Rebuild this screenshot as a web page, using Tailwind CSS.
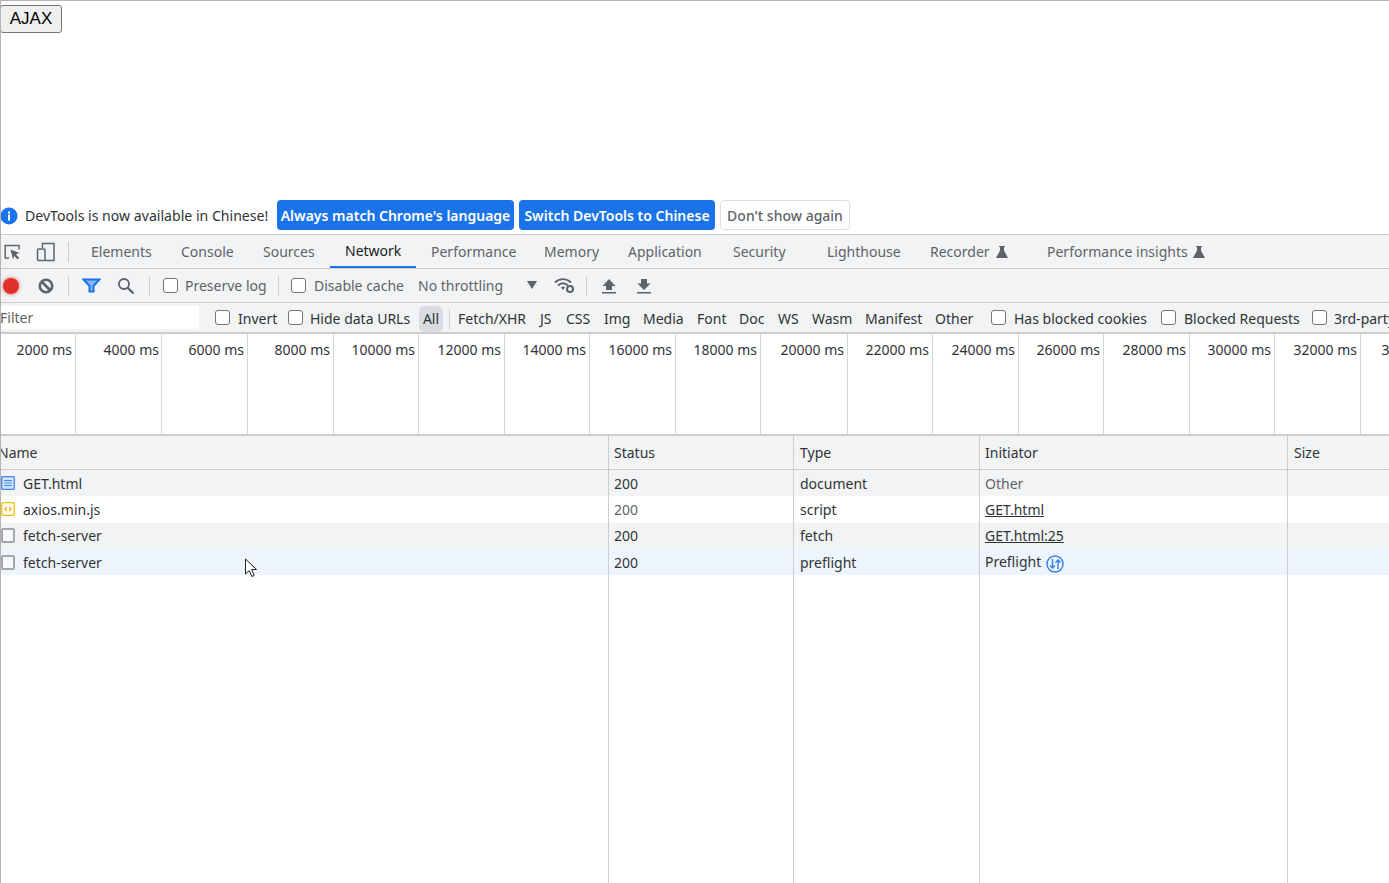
<!DOCTYPE html>
<html><head><meta charset="utf-8"><title>AJAX</title>
<script src="https://cdn.jsdelivr.net/npm/@tailwindcss/browser@4"></script></head>
<body class="m-0 bg-white">
<div class="relative w-[1389px] h-[883px] overflow-hidden bg-white border-t border-l border-[#b4b4b4] flex flex-col font-['Noto_Sans',sans-serif] text-[14px] text-[#303336]">
  <div class="h-[199px] shrink-0 pt-[4px]">
    <button class="block -ml-px w-[62px] h-[28px] pb-[2px] rounded-[3px] border border-[#767676] bg-[#efefef] text-black text-[17px] font-['Liberation_Sans',sans-serif] leading-none">AJAX</button>
  </div>
  <div class="h-[35px] shrink-0 flex items-start border-b border-[#cbcdd1]">
    <svg class="-ml-px mt-[7px] shrink-0" width="18" height="18" viewBox="0 0 18 18"><circle cx="9" cy="9" r="8.5" fill="#1a73e8"/><rect x="8" y="7.5" width="2" height="6" fill="#fff"/><rect x="8" y="4.5" width="2" height="2" fill="#fff"/></svg>
    <span class="ml-[7px] w-[252px] mt-[6px] leading-[20px] whitespace-nowrap text-[14.1px]">DevTools is now available in Chinese!</span>
    <span class="w-[237px] h-[30px] rounded-[4px] bg-[#1a73e8] text-white font-semibold flex items-center justify-center whitespace-nowrap">Always match Chrome's language</span>
    <span class="ml-[5px] w-[196px] h-[30px] rounded-[4px] bg-[#1a73e8] text-white font-semibold flex items-center justify-center whitespace-nowrap">Switch DevTools to Chinese</span>
    <span class="ml-[5px] w-[130px] h-[30px] rounded-[4px] bg-white border border-[#dadce0] text-[#5f6368] font-medium flex items-center justify-center whitespace-nowrap">Don't show again</span>
  </div>
  <div class="h-[34px] shrink-0 bg-[#f1f3f4] border-b border-[#cbcdd1] flex items-center text-[#5f6368]">
    <svg class="ml-[2px] shrink-0" width="18" height="18" viewBox="0 0 18 18" fill="none"><path d="M6 15H2.200V2.500H16V6.500" stroke="#5f6368" stroke-width="1.500"/><path d="M7.500 6.500l9 3.600-3.600 1.300 3.400 3.400-1.600 1.600-3.400-3.400-1.200 3.600z" fill="#5f6368"/></svg>
    <svg class="ml-[15px] shrink-0" width="20" height="20" viewBox="0 0 20 20" fill="none" stroke="#5f6368" stroke-width="1.500"><path d="M6.500 6V1.500H18V18.500H9"/><rect x="1.500" y="7" width="7.500" height="11.500" rx="1"/></svg>
    <div class="ml-[12px] w-px h-[20px] bg-[#cbcdd1] shrink-0"></div>
    <div class="ml-[7px] flex h-full items-stretch whitespace-nowrap">
      <span class="w-[90px] pl-[15px] flex items-center">Elements</span>
      <span class="w-[82px] pl-[15px] flex items-center">Console</span>
      <span class="w-[82px] pl-[15px] flex items-center">Sources</span>
      <span class="w-[86px] pl-[15px] flex items-center text-[#202124] border-b-2 border-[#1a73e8]">Network</span>
      <span class="w-[113px] pl-[15px] flex items-center">Performance</span>
      <span class="w-[84px] pl-[15px] flex items-center">Memory</span>
      <span class="w-[105px] pl-[15px] flex items-center">Application</span>
      <span class="w-[94px] pl-[15px] flex items-center">Security</span>
      <span class="w-[103px] pl-[15px] flex items-center">Lighthouse</span>
      <span class="w-[117px] pl-[15px] flex items-center">Recorder
        <svg class="ml-[6px]" width="12" height="12" viewBox="0 0 12 12"><path d="M3 0h6v1H8v3.500L12 12H0l4-7.500V1H3z" fill="#5f6368"/></svg></span>
      <span class="w-[180px] pl-[15px] flex items-center">Performance insights
        <svg class="ml-[5px]" width="12" height="12" viewBox="0 0 12 12"><path d="M3 0h6v1H8v3.500L12 12H0l4-7.500V1H3z" fill="#5f6368"/></svg></span>
    </div>
  </div>
  <div class="h-[34px] shrink-0 bg-[#f1f3f4] border-b border-[#cbcdd1] flex items-center text-[#5f6368] whitespace-nowrap">
    <div class="ml-[2px] w-[16px] h-[16px] rounded-full bg-[#e0302a] shadow-[0_0_2px_2px_rgba(224,48,42,0.25)] shrink-0"></div>
    <svg class="ml-[19px] shrink-0" width="16" height="16" viewBox="0 0 16 16" fill="none" stroke="#5f6368" stroke-width="2.600"><circle cx="8" cy="8" r="6.200"/><path d="M3.500 3.500l9 9"/></svg>
    <div class="ml-[14px] w-px h-[20px] bg-[#cbcdd1] shrink-0"></div>
    <svg class="ml-[13px] shrink-0" width="19" height="15" viewBox="0 0 19 15" fill="#8ab4f8" stroke="#1a73e8" stroke-width="2"><path d="M1.500 1.500h16l-6 6.500v5.500h-4V8z"/></svg>
    <svg class="ml-[16px] shrink-0" width="18" height="18" viewBox="0 0 18 18" fill="none" stroke="#5f6368" stroke-width="1.800"><circle cx="7" cy="7" r="5"/><path d="M10.500 10.500l6 6" stroke-width="2.200"/></svg>
    <div class="ml-[14px] w-px h-[20px] bg-[#cbcdd1] shrink-0"></div>
    <input type="checkbox" class="appearance-none ml-[13px] w-[15px] h-[15px] rounded-[3px] border border-[#767676] bg-white shrink-0">
    <span class="ml-[7px] w-[93px] shrink-0">Preserve log</span>
    <div class="w-px h-[20px] bg-[#cbcdd1] shrink-0"></div>
    <input type="checkbox" class="appearance-none ml-[12px] w-[15px] h-[15px] rounded-[3px] border border-[#767676] bg-white shrink-0">
    <span class="ml-[8px] w-[104px] shrink-0">Disable cache</span>
    <span class="w-[109px] shrink-0">No throttling</span>
    <svg class="shrink-0 -mt-[2px]" width="10" height="8" viewBox="0 0 10 8"><path d="M0 0h10L5 8z" fill="#5f6368"/></svg>
    <svg class="ml-[17px] shrink-0" width="21" height="17" viewBox="0 0 21 17" fill="none"><path d="M1 5.500C5.500 1 12.500 1 17 5.500M4 8.500c3-3 7-3 10 0" stroke="#5f6368" stroke-width="1.800"/><path d="M7 10.500c1.300-1.200 2.700-1.200 4 0L9 13z" fill="#5f6368"/><circle cx="16" cy="12" r="3" fill="none" stroke="#5f6368" stroke-width="2"/></svg>
    <div class="ml-[11px] w-px h-[20px] bg-[#cbcdd1] shrink-0"></div>
    <svg class="ml-[15px] shrink-0" width="14" height="16" viewBox="0 0 14 16"><path d="M7 1l6.500 7H10v4H4V8H.5zM0 14h14v1.500H0z" fill="#5f6368"/></svg>
    <svg class="ml-[21px] shrink-0" width="14" height="16" viewBox="0 0 14 16"><path d="M4 1h6v4.500h3.500L7 12 .5 5.500H4zM0 14h14v1.500H0z" fill="#5f6368"/></svg>
  </div>
  <div class="h-[31px] shrink-0 pt-[2px] bg-[#f1f3f4] border-b-2 border-[#cbcdd1] flex items-center text-[#303336] whitespace-nowrap *:shrink-0">
    <div class="-ml-px -mt-[2px] w-[199px] h-[23px] bg-white text-[#5f6368] flex items-center">Filter</div>
    <input type="checkbox" class="appearance-none -mt-[2px] ml-[16px] w-[15px] h-[15px] rounded-[3px] border border-[#767676] bg-white">
    <span class="ml-[8px] w-[50px]">Invert</span>
    <input type="checkbox" class="appearance-none -mt-[2px] w-[15px] h-[15px] rounded-[3px] border border-[#767676] bg-white">
    <span class="ml-[7px] w-[109px]">Hide data URLs</span>
    <span class="w-[24px] h-[26px] rounded-[5px] bg-[#dadce0] flex items-center justify-center">All</span>
    <div class="ml-[6px] w-px h-[20px] bg-[#cbcdd1]"></div>
    <div class="ml-[8px] flex *:shrink-0">
      <span class="w-[82px]">Fetch/XHR</span><span class="w-[26px]">JS</span><span class="w-[38px]">CSS</span><span class="w-[39px]">Img</span><span class="w-[54px]">Media</span><span class="w-[42px]">Font</span><span class="w-[39px]">Doc</span><span class="w-[34px]">WS</span><span class="w-[53px]">Wasm</span><span class="w-[70px]">Manifest</span><span class="w-[56px]">Other</span>
    </div>
    <input type="checkbox" class="appearance-none -mt-[2px] w-[15px] h-[15px] rounded-[3px] border border-[#767676] bg-white">
    <span class="ml-[8px] w-[147px]">Has blocked cookies</span>
    <input type="checkbox" class="appearance-none -mt-[2px] w-[15px] h-[15px] rounded-[3px] border border-[#767676] bg-white">
    <span class="ml-[8px] w-[128px]">Blocked Requests</span>
    <input type="checkbox" class="appearance-none -mt-[2px] w-[15px] h-[15px] rounded-[3px] border border-[#767676] bg-white">
    <span class="ml-[7px]">3rd-party requests</span>
  </div>
  <div class="h-[102px] shrink-0 border-b-2 border-[#cbcdd1] flex -ml-px whitespace-nowrap">
    <div class="w-[76px] shrink-0 border-r border-[#d5d5d5] text-right pr-[3px] pt-[5px]">2000 ms</div>
    <div class="w-[86px] shrink-0 border-r border-[#d5d5d5] text-right pr-[2px] pt-[5px]">4000 ms</div>
    <div class="w-[86px] shrink-0 border-r border-[#d5d5d5] text-right pr-[3px] pt-[5px]">6000 ms</div>
    <div class="w-[86px] shrink-0 border-r border-[#d5d5d5] text-right pr-[3px] pt-[5px]">8000 ms</div>
    <div class="w-[85px] shrink-0 border-r border-[#d5d5d5] text-right pr-[3px] pt-[5px]">10000 ms</div>
    <div class="w-[86px] shrink-0 border-r border-[#d5d5d5] text-right pr-[3px] pt-[5px]">12000 ms</div>
    <div class="w-[85px] shrink-0 border-r border-[#d5d5d5] text-right pr-[3px] pt-[5px]">14000 ms</div>
    <div class="w-[86px] shrink-0 border-r border-[#d5d5d5] text-right pr-[3px] pt-[5px]">16000 ms</div>
    <div class="w-[85px] shrink-0 border-r border-[#d5d5d5] text-right pr-[3px] pt-[5px]">18000 ms</div>
    <div class="w-[87px] shrink-0 border-r border-[#d5d5d5] text-right pr-[3px] pt-[5px]">20000 ms</div>
    <div class="w-[85px] shrink-0 border-r border-[#d5d5d5] text-right pr-[3px] pt-[5px]">22000 ms</div>
    <div class="w-[86px] shrink-0 border-r border-[#d5d5d5] text-right pr-[3px] pt-[5px]">24000 ms</div>
    <div class="w-[85px] shrink-0 border-r border-[#d5d5d5] text-right pr-[3px] pt-[5px]">26000 ms</div>
    <div class="w-[86px] shrink-0 border-r border-[#d5d5d5] text-right pr-[3px] pt-[5px]">28000 ms</div>
    <div class="w-[85px] shrink-0 border-r border-[#d5d5d5] text-right pr-[3px] pt-[5px]">30000 ms</div>
    <div class="w-[86px] shrink-0 border-r border-[#d5d5d5] text-right pr-[3px] pt-[5px]">32000 ms</div>
    <div class="w-[87px] shrink-0 text-right pr-[3px] pt-[5px]">34000 ms</div>
  </div>
  <div class="flex-1 flex flex-col -ml-px whitespace-nowrap">
    <div class="h-[34px] shrink-0 grid grid-cols-[608px_185px_186px_308px_1fr] bg-[#f1f3f4] border-b border-[#cbcdd1] items-stretch">
      <div class="flex items-center -ml-[2px]">Name</div>
      <div class="flex items-center pl-[5px] border-l border-[#cbcdd1]">Status</div>
      <div class="flex items-center pl-[6px] border-l border-[#cbcdd1]">Type</div>
      <div class="flex items-center pl-[5px] border-l border-[#cbcdd1]">Initiator</div>
      <div class="flex items-center pl-[6px] border-l border-[#cbcdd1]">Size</div>
    </div>
    <div class="h-[26px] shrink-0 grid grid-cols-[608px_185px_186px_308px_1fr] bg-[#f1f3f4]">
      <div class="flex items-center pl-[1px]"><svg width="14" height="14" viewBox="0 0 14 14" class="shrink-0"><rect x=".7" y=".7" width="12.600" height="12.600" rx="1" fill="#d2e3fc" stroke="#4285f4" stroke-width="1.300"/><path d="M3 4.500h8M3 7h8M3 9.500h8" stroke="#4285f4" stroke-width="1.100"/></svg><span class="ml-[8px]">GET.html</span></div>
      <div class="flex items-center pl-[5px] border-l border-[#cbcdd1]">200</div>
      <div class="flex items-center pl-[6px] border-l border-[#cbcdd1]">document</div>
      <div class="flex items-center pl-[5px] border-l border-[#cbcdd1] text-[#5f6368]">Other</div>
      <div class="border-l border-[#cbcdd1]"></div>
    </div>
    <div class="h-[27px] shrink-0 grid grid-cols-[608px_185px_186px_308px_1fr] bg-white">
      <div class="flex items-center pl-[1px] pb-[1px]"><svg width="14" height="14" viewBox="0 0 14 14" class="shrink-0" fill="none"><rect x=".7" y=".7" width="12.600" height="12.600" rx="1" stroke="#fbbc04" stroke-width="1.300"/><path d="M6 5L3.800 7 6 9M8 5l2.200 2L8 9" stroke="#f9ab00" stroke-width="1.200"/></svg><span class="ml-[8px]">axios.min.js</span></div>
      <div class="flex items-center pl-[5px] pb-[1px] border-l border-[#cbcdd1] text-[#5f6368]">200</div>
      <div class="flex items-center pl-[6px] pb-[1px] border-l border-[#cbcdd1]">script</div>
      <div class="flex items-center pl-[5px] pb-[1px] border-l border-[#cbcdd1] underline">GET.html</div>
      <div class="border-l border-[#cbcdd1]"></div>
    </div>
    <div class="h-[26px] shrink-0 grid grid-cols-[608px_185px_186px_308px_1fr] bg-[#f1f3f4]">
      <div class="flex items-center pl-[1px] pb-[2px]"><span class="w-[14px] h-[15px] rounded-[2px] border-2 border-[#a3a6aa] bg-[#f8f9fa] shrink-0"></span><span class="ml-[8px]">fetch-server</span></div>
      <div class="flex items-center pl-[5px] pb-[2px] border-l border-[#cbcdd1]">200</div>
      <div class="flex items-center pl-[6px] pb-[2px] border-l border-[#cbcdd1]">fetch</div>
      <div class="flex items-center pl-[5px] pb-[2px] border-l border-[#cbcdd1] underline">GET.html:25</div>
      <div class="border-l border-[#cbcdd1]"></div>
    </div>
    <div class="h-[26px] shrink-0 grid grid-cols-[608px_185px_186px_308px_1fr] bg-[#eef4fc]">
      <div class="flex items-center pl-[1px]"><span class="w-[14px] h-[15px] rounded-[2px] border-2 border-[#a3a6aa] bg-[#f8f9fa] shrink-0"></span><span class="ml-[8px]">fetch-server</span></div>
      <div class="flex items-center pl-[5px] border-l border-[#cbcdd1]">200</div>
      <div class="flex items-center pl-[6px] border-l border-[#cbcdd1]">preflight</div>
      <div class="flex items-center pl-[5px] border-l border-[#cbcdd1]"><span class="-mt-[2px]">Preflight</span>
        <svg class="ml-[5px] mt-[3px]" width="18" height="18" viewBox="0 0 18 18" fill="none" stroke="#3b82e8" stroke-width="1.500"><circle cx="9" cy="9" r="8"/><path d="M6.500 4v9M4 10.500l2.500 2.500L9 10.500M12 14V5M9.500 7.500L12 5l2.500 2.500"/></svg></div>
      <div class="border-l border-[#cbcdd1]"></div>
    </div>
    <div class="flex-1 grid grid-cols-[608px_185px_186px_308px_1fr] bg-white">
      <div></div><div class="border-l border-[#cbcdd1]"></div><div class="border-l border-[#cbcdd1]"></div><div class="border-l border-[#cbcdd1]"></div><div class="border-l border-[#cbcdd1]"></div>
    </div>
  </div>
  <svg class="absolute left-[243px] top-[557px]" width="15" height="21" viewBox="0 0 15 21"><path d="M1.500 1v15l3.700-3.500 2.600 6 2.400-1-2.600-6h5z" fill="#fff" stroke="#222" stroke-width="1"/></svg>
</div>
</body></html>
